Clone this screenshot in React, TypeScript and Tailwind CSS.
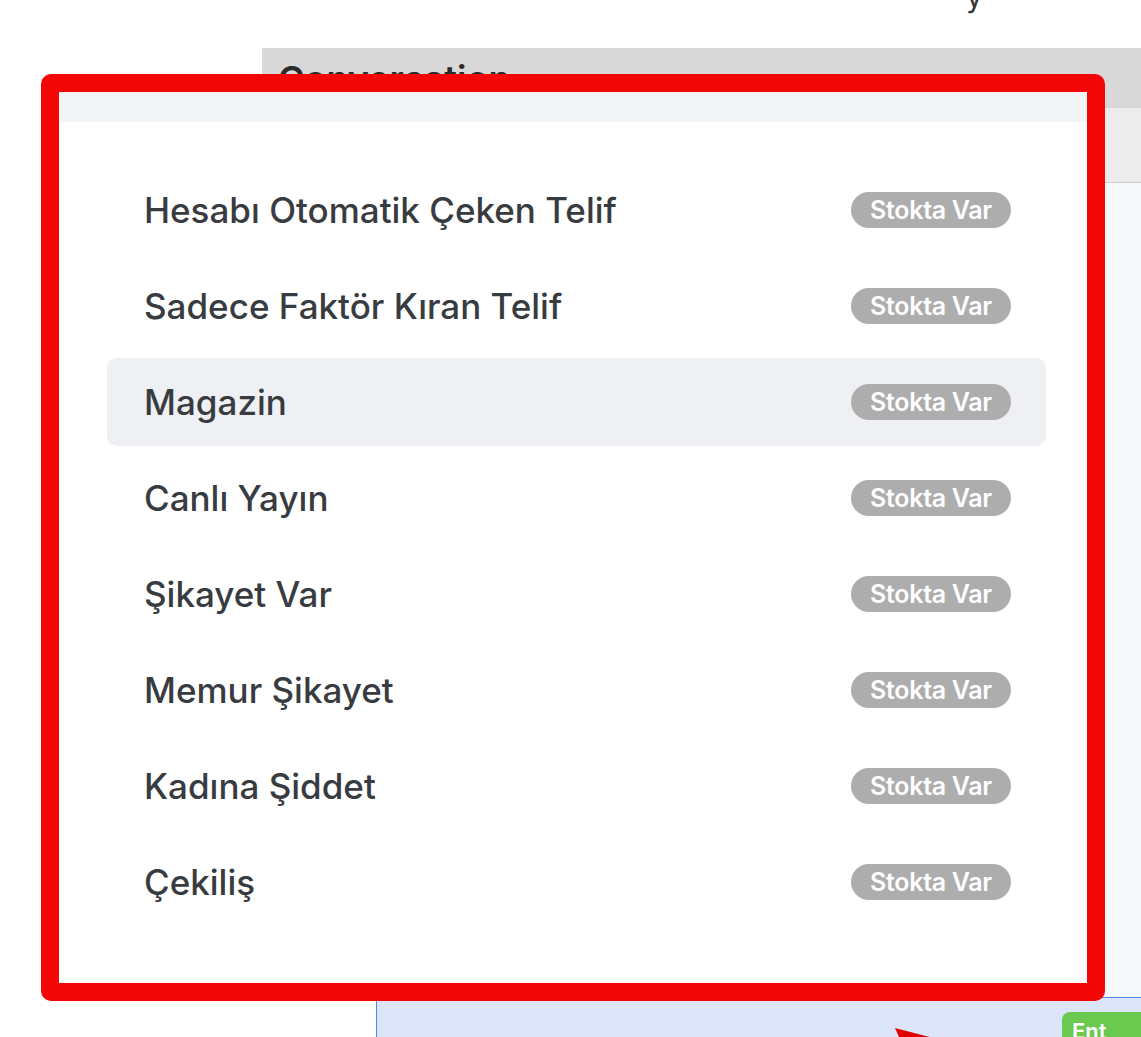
import React from "react";

const items = [
  "Hesabı Otomatik Çeken Telif",
  "Sadece Faktör Kıran Telif",
  "Magazin",
  "Canlı Yayın",
  "Şikayet Var",
  "Memur Şikayet",
  "Kadına Şiddet",
  "Çekiliş",
];

// Row that is currently hovered in the captured state
const activeIndex = 2;

function StockBadge() {
  return (
    <span className="inline-flex h-[36px] items-center rounded-full bg-[#adadad] px-[19px] text-[25px] font-semibold leading-none tracking-[-0.3px] text-white">
      Stokta Var
    </span>
  );
}

function ProductPicker() {
  return (
    <div className="absolute left-[41px] top-[74px] h-[927px] w-[1064px] rounded-[10px] border-[18px] border-[#f20606]">
      <div className="flex h-full flex-col bg-white">
        <div className="h-[30px] bg-[#f3f4f6]" />
        <div className="flex flex-col gap-[8px] pl-[48px] pr-[41px] pt-[44px]">
          {items.map((name, i) => (
            <div
              key={name}
              className={`flex h-[88px] items-center justify-between rounded-[10px] pl-[37px] pr-[35px] ${
                i === activeIndex ? "bg-[#eef0f3]" : ""
              }`}
            >
              <span className="text-[35px] font-medium text-[#383b40]">
                {name}
              </span>
              <StockBadge />
            </div>
          ))}
        </div>
      </div>
    </div>
  );
}

export default function App() {
  return (
    <div
      className="relative flex h-[1037px] w-[1141px] flex-col overflow-hidden bg-white"
      style={{ fontFamily: "Inter, 'Noto Sans', sans-serif" }}
    >
      <div className="relative h-[48px]">
        <span className="absolute left-[966px] top-[-26px] text-[30px] text-[#333]">
          y
        </span>
      </div>

      <div className="ml-[262px] flex flex-1 flex-col">
        <div className="h-[60px] bg-[#d8d8d8] px-[16px] pt-[4px] text-[36px] font-semibold text-[#2b2b2b]">
          Conversation
        </div>
        <div className="h-[75px] border-b border-[#cdcdcd] bg-[#ececec]" />
        <div className="flex-1 bg-[#f7f8f9]" />
      </div>

      <div className="flex h-[40px]">
        <div className="w-[376px] bg-white" />
        <div className="flex flex-1 justify-end border-l border-t border-[#4a8fe0] bg-[#dde5fb] pt-[14px]">
          <div className="w-[79px] rounded-tl-[8px] bg-[#6cc950] pl-[10px] pt-[8px] text-[22px] font-semibold leading-none text-white">
            Ent
          </div>
        </div>
      </div>

      <svg
        className="absolute left-[893px] top-[1026px]"
        width="60"
        height="20"
        viewBox="0 0 60 20"
      >
        <polygon points="2,2 48,14 40,20 10,20" fill="#e00000" />
      </svg>

      <ProductPicker />
    </div>
  );
}
